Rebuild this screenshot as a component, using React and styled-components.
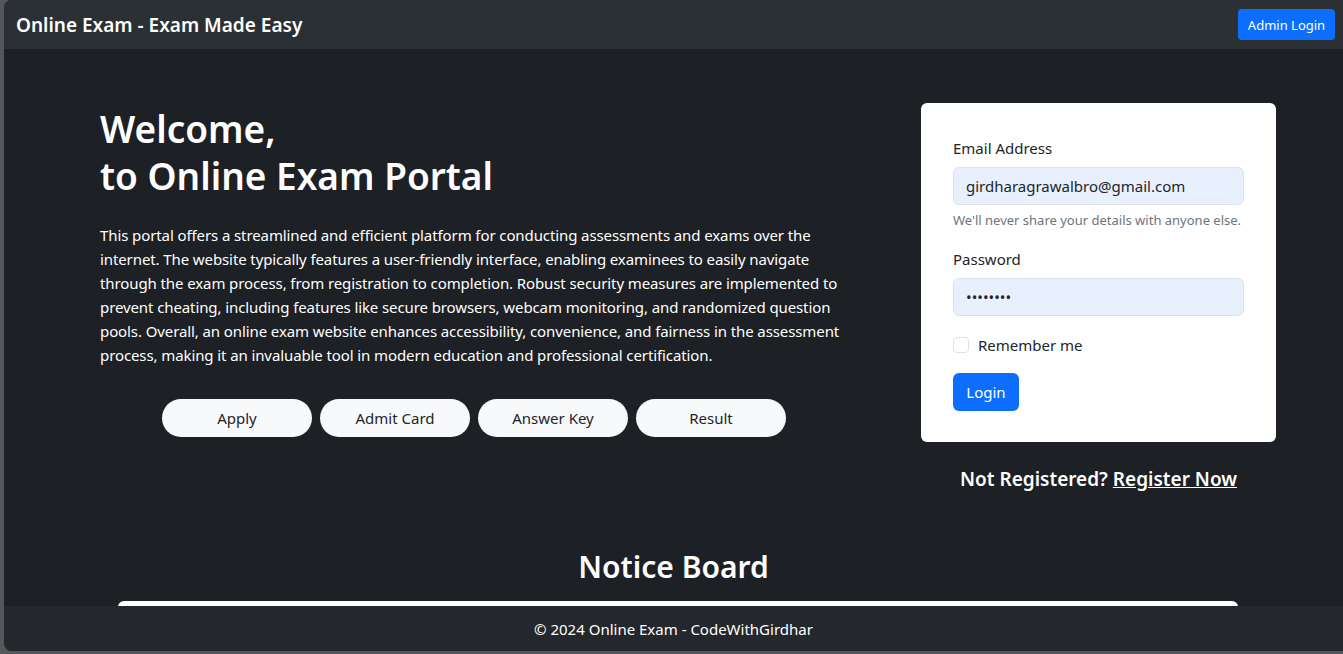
import React from 'react';
import styled, { createGlobalStyle } from 'styled-components';

const GlobalStyle = createGlobalStyle`
  * { box-sizing: border-box; }
  html, body {
    margin: 0;
    padding: 0;
    background-color: #56575b;
    font-family: 'Noto Sans', 'Open Sans', sans-serif;
  }
`;

const Window = styled.div`
  margin-left: 4px;
  height: 651px;
  border-radius: 8px 0 0 8px;
  overflow: hidden;
  display: flex;
  flex-direction: column;
  background-color: #1d2024;
  color: #fff;
`;

const Navbar = styled.nav`
  height: 49px;
  flex-shrink: 0;
  background-color: #2b3035;
  display: flex;
  align-items: center;
  justify-content: space-between;
  padding: 0 8px 0 12px;
`;

const Brand = styled.span`
  font-size: 19px;
  font-weight: 600;
  color: #fff;
`;

const SmallButton = styled.button`
  background-color: #0d6efd;
  color: #fff;
  border: none;
  border-radius: 4px;
  height: 31px;
  width: 97px;
  padding: 0;
  font-family: inherit;
  font-size: 13px;
`;

const Main = styled.main`
  flex: 1;
  overflow: hidden;
  padding-top: 54px;
`;

const Hero = styled.div`
  display: flex;
  align-items: flex-start;
  padding-left: 96px;
  gap: 73px;
`;

const LeftCol = styled.div`
  width: 748px;
`;

const Title = styled.h1`
  margin: 0 0 24px;
  padding-top: 2px;
  font-size: 37px;
  font-weight: 600;
  line-height: 47px;
`;

const Text = styled.p`
  margin: 0 0 32px;
  font-size: 15px;
  line-height: 24px;
  letter-spacing: -0.1px;
  color: #fff;
`;

const Links = styled.div`
  display: flex;
  justify-content: center;
  gap: 8px;
`;

const PillButton = styled.button`
  width: 150px;
  height: 38px;
  border: none;
  border-radius: 19px;
  background-color: #f8f9fa;
  color: #212529;
  font-family: inherit;
  font-size: 15px;
`;

const RightCol = styled.div`
  width: 355px;
  display: flex;
  flex-direction: column;
  align-items: center;
`;

const Card = styled.form`
  width: 100%;
  background-color: #fff;
  border-radius: 6px;
  padding: 33px 32px 31px 32px;
  color: #212529;
`;

const Label = styled.label`
  display: block;
  font-size: 15px;
  line-height: 24px;
  margin-bottom: 7px;
`;

const Input = styled.input`
  display: block;
  width: 100%;
  height: 38px;
  border: 1px solid #dee2e6;
  border-radius: 6px;
  background-color: #e8f0fe;
  padding: 0 12px;
  font-family: inherit;
  font-size: 15px;
  color: #212529;
  outline: none;
`;

const Help = styled.div`
  font-size: 13px;
  line-height: 20px;
  color: #6c757d;
  margin-top: 5px;
  margin-bottom: 17px;
`;

const CheckRow = styled.label`
  display: flex;
  align-items: center;
  gap: 9px;
  margin: 17px 0 16px;
  font-size: 15px;
  line-height: 24px;
`;

const Box = styled.span`
  width: 16px;
  height: 16px;
  border: 1px solid #dee2e6;
  border-radius: 4px;
  background: #fff;
`;

const PrimaryButton = styled.button`
  background-color: #0d6efd;
  color: #fff;
  border: none;
  border-radius: 6px;
  height: 38px;
  width: 66px;
  padding: 0;
  font-family: inherit;
  font-size: 15px;
`;

const Register = styled.div`
  margin-top: 25px;
  font-size: 19px;
  font-weight: 600;
  line-height: 24px;
  color: #fff;

  a {
    color: #fff;
    text-decoration: underline;
  }
`;

const NoticeTitle = styled.h2`
  margin: 57px 0 15px;
  text-align: center;
  font-size: 30px;
  font-weight: 600;
  line-height: 38px;
`;

const NoticeBox = styled.div`
  margin: 0 105px 0 114px;
  height: 200px;
  background-color: #fff;
  border-radius: 6px;
`;

const Footer = styled.footer`
  height: 45px;
  flex-shrink: 0;
  background-color: #24272b;
  display: flex;
  align-items: center;
  justify-content: center;
  font-size: 15px;
  color: #fff;
`;

const App = () => {
  return (
    <>
      <GlobalStyle />
      <Window>
        <Navbar>
          <Brand>Online Exam - Exam Made Easy</Brand>
          <SmallButton>Admin Login</SmallButton>
        </Navbar>
        <Main>
          <Hero>
            <LeftCol>
              <Title>
                Welcome,
                <br />
                to Online Exam Portal
              </Title>
              <Text>
                This portal offers a streamlined and efficient platform for conducting assessments and exams over the
                internet. The website typically features a user-friendly interface, enabling examinees to easily navigate
                through the exam process, from registration to completion. Robust security measures are implemented to
                prevent cheating, including features like secure browsers, webcam monitoring, and randomized question
                pools. Overall, an online exam website enhances accessibility, convenience, and fairness in the assessment
                process, making it an invaluable tool in modern education and professional certification.
              </Text>
              <Links>
                <PillButton>Apply</PillButton>
                <PillButton>Admit Card</PillButton>
                <PillButton>Answer Key</PillButton>
                <PillButton>Result</PillButton>
              </Links>
            </LeftCol>
            <RightCol>
              <Card onSubmit={(e) => e.preventDefault()}>
                <Label htmlFor='email'>Email Address</Label>
                <Input id='email' type='email' defaultValue='girdharagrawalbro@gmail.com' />
                <Help>We'll never share your details with anyone else.</Help>
                <Label htmlFor='password'>Password</Label>
                <Input id='password' type='password' defaultValue='12345678' />
                <CheckRow>
                  <Box />
                  Remember me
                </CheckRow>
                <PrimaryButton>Login</PrimaryButton>
              </Card>
              <Register>
                Not Registered? <a href='#register'>Register Now</a>
              </Register>
            </RightCol>
          </Hero>
          <NoticeTitle>Notice Board</NoticeTitle>
          <NoticeBox />
        </Main>
        <Footer>© 2024 Online Exam - CodeWithGirdhar</Footer>
      </Window>
    </>
  );
};

export default App;
